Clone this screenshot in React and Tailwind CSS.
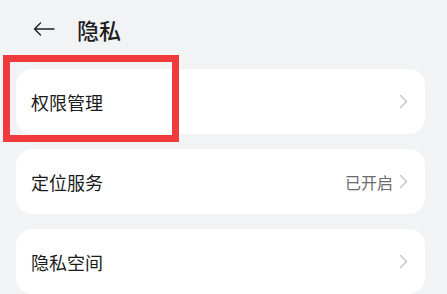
import React from "react";

function Chevron() {
  return (
    <svg width="9" height="15" viewBox="0 0 9 15" fill="none" className="shrink-0">
      <path d="M1.5 1.5 L7.5 7.5 L1.5 13.5" stroke="#c4c4c4" strokeWidth="1.4" strokeLinecap="round" strokeLinejoin="round" />
    </svg>
  );
}

function Row({ label, value }) {
  return (
    <div className="h-[65px] rounded-[16px] bg-white flex items-center pl-[15px] pr-[17px]">
      <span className="text-[18px] leading-none text-[#1b1b1b] flex-1">{label}</span>
      {value && <span className="text-[16px] leading-none text-[#6b6b6b] mr-[6px]">{value}</span>}
      <Chevron />
    </div>
  );
}

export default function App() {
  return (
    <div
      className="relative w-[447px] h-[294px] overflow-hidden bg-[#f1f3f5]"
      style={{ fontFamily: '"Noto Sans CJK SC", "Noto Sans", sans-serif' }}
    >
      <div className="h-[58px] flex items-center pl-[33px]">
        <svg width="22" height="14" viewBox="0 0 22 14" fill="none" className="shrink-0">
          <path d="M21 7 H1.5 M7.5 1 L1.5 7 L7.5 13" stroke="#1f1f1f" strokeWidth="1.4" strokeLinecap="round" strokeLinejoin="round" />
        </svg>
        <span className="ml-[22px] text-[22px] leading-none font-medium text-[#1e1e1e]">隐私</span>
      </div>
      <div className="pt-[11px] pl-[16px] pr-[22px] flex flex-col gap-[15px]">
        <Row label="权限管理" />
        <Row label="定位服务" value="已开启" />
        <Row label="隐私空间" />
      </div>
      <div className="absolute left-[3px] top-[55px] w-[176px] h-[87px] border-[7px] border-[#ef3b3e]" />
    </div>
  );
}
